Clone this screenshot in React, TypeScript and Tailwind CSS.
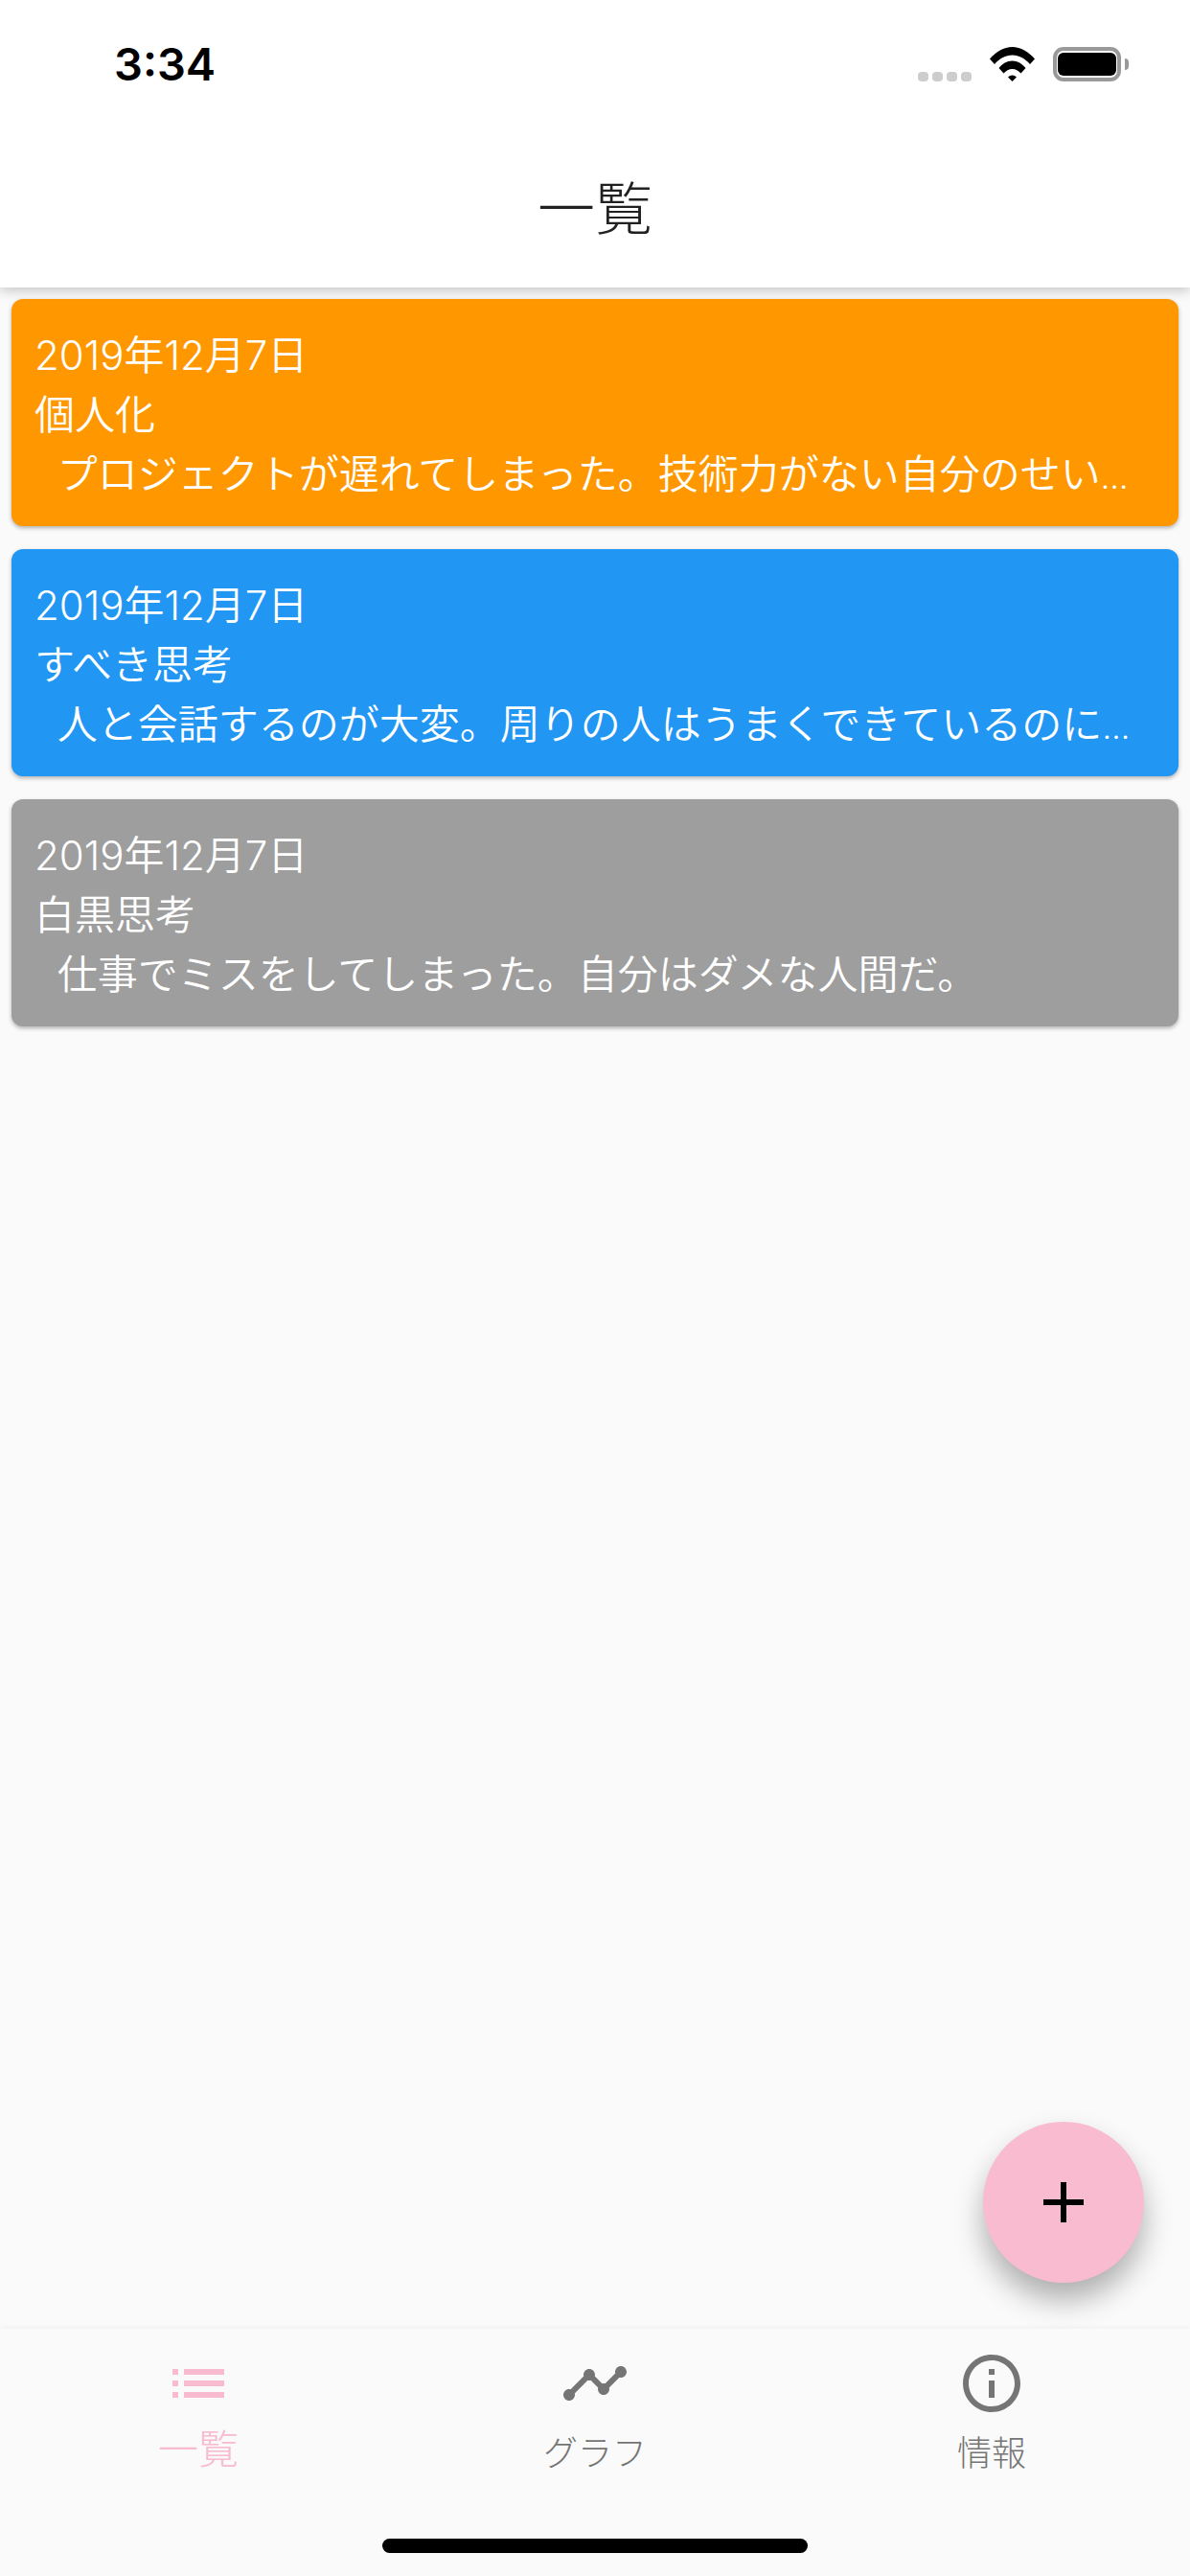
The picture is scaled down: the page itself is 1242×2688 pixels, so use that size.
const cards = [
  { color: 'bg-[#ff9800]', tag: '個人化', text: '  プロジェクトが遅れてしまった。技術力がない自分のせい', cut: true },
  { color: 'bg-[#2196f3]', tag: 'すべき思考', text: '  人と会話するのが大変。周りの人はうまくできているのに', cut: true },
  { color: 'bg-[#9e9e9e]', tag: '白黒思考', text: '  仕事でミスをしてしまった。自分はダメな人間だ。', cut: false },
];

const font = "font-['Inter','Noto_Sans_CJK_JP',sans-serif]";

function StatusBar() {
  return (
    <div className="flex h-[132px] items-start justify-between pl-[119px] pr-[64px] pt-[44px]">
      <span className="text-[47px] leading-[46px] font-semibold text-black font-['Inter',sans-serif]">3:34</span>
      <div className="flex items-start pt-[5px]">
        <div className="mt-[26px] flex gap-[4px]">
          {[0, 1, 2, 3].map((i) => (
            <span key={i} className="h-[10px] w-[11px] rounded-[4px] bg-[#cdcdcd]" />
          ))}
        </div>
        <svg className="ml-[19px] h-[36px] w-[47px]" viewBox="0 0 47 36">
          <path d="M0 12.5C6.5 5 14.5 0 23.5 0S40.500 5 47 12.5l-5 5.500C36.500 12 30.500 8.500 23.500 8.500S10.500 12 5 18z" fill="#000" />
          <path d="M9.500 22C13 17.500 18 14.500 23.500 14.500S34 17.500 37.500 22l-5 5.500c-2.500-2.500-5.500-4.500-9-4.500s-6.500 2-9 4.500z" fill="#000" />
          <path d="M19 31.500c1.200-1.300 2.800-2 4.500-2s3.300.7 4.500 2L23.500 36z" fill="#000" />
        </svg>
        <div className="ml-[19px] flex h-[36px] w-[71px] items-center justify-center rounded-[11px] border-[4px] border-[#999999]">
          <div className="h-[24px] w-[61px] rounded-[6px] bg-black" />
        </div>
        <div className="ml-[4px] mt-[12px] h-[12px] w-[4px] rounded-r-[4px] bg-[#999999]" />
      </div>
    </div>
  );
}

export default function App() {
  return (
    <div className={`flex h-[2688px] w-[1242px] flex-col overflow-hidden bg-[#fafafa] ${font}`}>
      <header className="relative z-10 bg-white shadow-[0_3px_12px_rgba(0,0,0,0.22)]">
        <StatusBar />
        <div className="flex h-[168px] items-center justify-center pt-[4px]">
          <h1 className="text-[60px] font-light leading-none text-[#212121]">一覧</h1>
        </div>
      </header>

      <main className="relative flex flex-1 flex-col gap-[24px] p-[12px]">
        {cards.map((card, i) => (
          <div
            key={i}
            className={`flex h-[237px] flex-col justify-center rounded-[12px] px-[24px] pt-[4px] text-[42px] font-[350] leading-[62px] text-white shadow-[0_2px_4px_rgba(0,0,0,0.3)] ${card.color}`}
          >
            <div>2019年12月7日</div>
            <div>{card.tag}</div>
            <div className="h-[62px] whitespace-pre">
              {card.text}
              {card.cut && <span className="text-[34px]">…</span>}
            </div>
          </div>
        ))}
        <button className="absolute bottom-[48px] right-[48px] flex h-[168px] w-[168px] items-center justify-center rounded-full bg-[#f8bbd0] shadow-[0_18px_30px_rgba(0,0,0,0.3)]">
          <svg className="h-[42px] w-[42px]" viewBox="0 0 42 42">
            <path d="M18 0h6v18h18v6H24v18h-6V24H0v-6h18z" fill="#000" />
          </svg>
        </button>
      </main>

      <nav className="relative h-[258px] bg-[#fafafa] shadow-[0_-1px_6px_rgba(0,0,0,0.05)]">
        <div className="grid grid-cols-3 pt-[21px]">
          <div className="flex flex-col items-center text-[#f8bbd0]">
            <svg className="h-[72px] w-[72px]" viewBox="0 0 24 24" fill="currentColor">
              <path d="M3 13h2v-2H3v2zm0 4h2v-2H3v2zm0-8h2V7H3v2zm4 4h14v-2H7v2zm0 4h14v-2H7v2zM7 7v2h14V7H7z" />
            </svg>
            <span className="mt-[8px] text-[42px] font-light leading-[50px]">一覧</span>
          </div>
          <div className="flex flex-col items-center text-[#757575]">
            <svg className="h-[72px] w-[72px]" viewBox="0 0 24 24" fill="currentColor">
              <path d="M23 8c0 1.100-.9 2-2 2-.18 0-.35-.02-.51-.07l-3.560 3.550c.05.16.07.34.07.52 0 1.100-.9 2-2 2s-2-.9-2-2c0-.18.02-.36.07-.52l-2.550-2.550c-.16.05-.34.07-.52.07s-.36-.02-.52-.07l-4.550 4.560c.05.16.07.33.07.51 0 1.100-.9 2-2 2s-2-.9-2-2 .9-2 2-2c.18 0 .35.02.51.07l4.560-4.550C8.020 9.360 8 9.180 8 9c0-1.100.9-2 2-2s2 .9 2 2c0 .18-.02.36-.07.52l2.550 2.550c.16-.05.34-.07.52-.07s.36.02.52.07l3.550-3.560C19.020 8.350 19 8.180 19 8c0-1.100.9-2 2-2s2 .9 2 2z" />
            </svg>
            <span className="mt-[12px] text-[36px] font-light leading-[50px]">グラフ</span>
          </div>
          <div className="flex flex-col items-center text-[#757575]">
            <svg className="h-[72px] w-[72px]" viewBox="0 0 24 24" fill="currentColor">
              <path d="M11 7h2v2h-2zm0 4h2v6h-2zm1-9C6.480 2 2 6.480 2 12s4.480 10 10 10 10-4.480 10-10S17.520 2 12 2zm0 18c-4.410 0-8-3.590-8-8s3.590-8 8-8 8 3.590 8 8-3.590 8-8 8z" />
            </svg>
            <span className="mt-[12px] text-[36px] font-light leading-[50px]">情報</span>
          </div>
        </div>
        <div className="absolute bottom-[24px] left-[399px] h-[15px] w-[444px] rounded-full bg-black" />
      </nav>
    </div>
  );
}
